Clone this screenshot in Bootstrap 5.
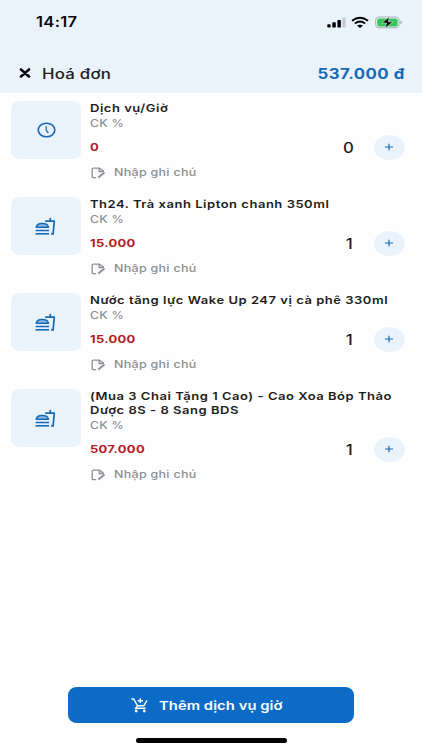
<!DOCTYPE html>
<html lang="vi">
<head>
<meta charset="utf-8">
<meta name="viewport" content="width=device-width, initial-scale=1">
<title>Hoá đơn</title>
<link href="https://cdn.jsdelivr.net/npm/bootstrap@5.3.0/dist/css/bootstrap.min.css" rel="stylesheet">
<style>
body{font-family:Inter,"Liberation Sans",sans-serif;color:#1c1d21;background:#fefefe;height:750px;overflow:hidden}
.top-area{background:#eaf2fb;height:93px}
.status-row{height:44px;padding:0 19px 0 36px}
.title-row{height:34px;margin-top:12px;padding:0 17px 0 19px}
.wide{display:inline-block;white-space:nowrap;transform:scaleX(1.2);transform-origin:0 50%}
.wide-end{transform-origin:100% 50%}
.clock-text{font-size:13.8px;font-weight:600;color:#08090b;letter-spacing:.25px;padding-top:1px}
.page-name{font-size:14px;font-weight:500;letter-spacing:.2px;margin-left:11px}
.total{font-size:14px;font-weight:700;color:#1769b7;letter-spacing:.4px}
.item-list{padding:8px 17px 0 11px}
.item{min-height:96px;gap:9px}
.thumb{width:70px;height:58px;border-radius:9px/7px;background:#eaf2fb;color:#1769b7}
.thumb .meal-icon{margin-top:1px}
.item-title{font-size:10.8px;line-height:14px;font-weight:600;letter-spacing:.45px;padding-top:1px}
.discount{font-size:10.2px;line-height:15px;font-weight:500;color:#8c8e94;letter-spacing:.25px}
.price-row{height:26px;margin-top:3px}
.price{font-size:10.8px;font-weight:700;color:#b52025;letter-spacing:.25px;padding-top:2px}
.qty{font-size:14px;font-weight:500;width:9px;margin-right:22px}
.qty-one{width:8px;margin-right:23px}
.plus{width:31px;height:25px;border-radius:50%;background:#eaf2fb;color:#1769b7}
.plus svg{margin-right:1px}
.note-row{height:15px;margin-top:5px;color:#8c8e94;gap:8px;padding-left:1px}
.note{font-size:10.4px;line-height:15px;font-weight:500;letter-spacing:.25px}
.add-btn,.add-btn:hover{width:286px;height:36px;border-radius:9px/8px;background:#0d6bc8;color:#fff;gap:11px}
.cart-icon{margin-left:63px}
.add-label{font-size:12.3px;font-weight:600;letter-spacing:.06px;width:103px;padding-top:2px}
.home-bar{width:151px;height:5px;background:#000;margin-top:15px;margin-bottom:7px}
</style>
<script src="https://cdn.jsdelivr.net/npm/bootstrap@5.3.0/dist/js/bootstrap.bundle.min.js"></script>
</head>
<body class="d-flex flex-column">
<svg width="0" height="0" class="position-absolute" aria-hidden="true">
  <symbol id="meal" viewBox="0 0 22 18">
    <path d="M1.2 9.3C1.5 6.8 4 5.5 7.3 5.5s5.8 1.3 6.2 3.8z" fill="#8ebbe6" stroke="currentColor" stroke-width="1.4" stroke-linejoin="round"/>
    <path d="M.6 12.5h13.5" stroke="currentColor" stroke-width="1.5"/><path d="M.6 15.8h13.5" stroke="currentColor" stroke-width="1.6"/>
    <path d="M10.2 3.2h9.7M15.3 0v3.2M19.3 3.2l-1.2 12.6h-2" fill="none" stroke="currentColor" stroke-width="1.7"/>
  </symbol>
  <symbol id="memo" viewBox="0 0 15 12">
    <path d="M5.2 10.6H2.2Q1.2 10.6 1.2 9.7V2Q1.2 1.1 2.2 1.1H8.7L12.3 4.1V5M8.2 1.4V4.5H12" fill="none" stroke="currentColor" stroke-width="1.3"/>
    <path d="M7.3 10.6L13.5 5.6" stroke="currentColor" stroke-width="1.9"/>
  </symbol>
  <symbol id="add" viewBox="0 0 10 8"><path d="M1 4h8M5 .7v6.6" stroke="currentColor" stroke-width="1.2"/></symbol>
</svg>
<header class="top-area flex-shrink-0">
  <div class="status-row d-flex align-items-center justify-content-between">
    <span class="wide clock-text">14:17</span>
    <div class="d-flex align-items-center">
      <svg width="19" height="11" viewBox="0 0 19 11"><rect x=".3" y="7.2" width="3.3" height="3.4" rx=".8"/><rect x="5.3" y="5.3" width="3.5" height="5.3" rx=".8"/><rect x="10.4" y="3" width="3.5" height="7.6" rx=".8"/><rect x="15.4" y=".6" width="3.2" height="10" rx=".8" fill="#c3c9d0"/></svg>
      <svg class="ms-1" width="20" height="13" viewBox="0 0 20 13"><path d="M2 4.7Q10-1.4 18 4.7M4.9 7.4Q10 3.6 15.1 7.4" fill="none" stroke="#000" stroke-width="1.9"/><path d="M7 9.6Q10 7.7 13 9.6L10 12z"/></svg>
      <svg class="ms-1" width="29" height="13" viewBox="0 0 29 13"><rect x="1.6" y="1" width="23.5" height="10.8" rx="3.3" fill="none" stroke="#9da9ac" stroke-width=".9"/><rect x="3.2" y="2.4" width="20.4" height="8" rx="2" fill="#35c759"/><path d="M26.5 4.8q1.5.3 1.5 1.7t-1.5 1.7z" fill="#9da9ac"/><path d="M15.5.8L7.9 7h4.6l-1.4 5.2L19 5.8h-4.8z" stroke="#eaf2fb" stroke-width=".6"/></svg>
    </div>
  </div>
  <div class="title-row d-flex align-items-center">
    <svg width="12" height="10" viewBox="0 0 12 10"><path d="M2 1.5l8 7M10 1.5l-8 7" stroke="#08090b" stroke-width="2.6" stroke-linecap="round"/></svg>
    <span class="wide page-name">Hoá đơn</span>
    <span class="wide wide-end total ms-auto">537.000 đ</span>
  </div>
</header>
<main class="item-list flex-grow-1">
  <section class="item d-flex">
    <div class="thumb d-flex flex-shrink-0 align-items-center justify-content-center"><svg width="19" height="16" viewBox="0 0 19 16"><ellipse cx="9.5" cy="8" rx="8.3" ry="6.8" fill="none" stroke="currentColor" stroke-width="1.6"/><path d="M9.2 4v4.2l2.2 3" fill="none" stroke="currentColor" stroke-width="1.2"/></svg></div>
    <div class="flex-grow-1">
      <div class="item-title"><span class="wide">Dịch vụ/Giờ</span></div>
      <div class="discount"><span class="wide">CK %</span></div>
      <div class="price-row d-flex align-items-center"><span class="wide price me-auto">0</span><span class="wide qty d-flex justify-content-end">0</span><span class="plus d-flex align-items-center justify-content-center"><svg width="10" height="8"><use href="#add"/></svg></span></div>
      <div class="note-row d-flex align-items-center"><svg width="15" height="12"><use href="#memo"/></svg><span class="wide note">Nhập ghi chú</span></div>
    </div>
  </section>
  <section class="item d-flex">
    <div class="thumb d-flex flex-shrink-0 align-items-center justify-content-center"><svg class="meal-icon" width="22" height="18"><use href="#meal"/></svg></div>
    <div class="flex-grow-1">
      <div class="item-title"><span class="wide">Th24. Trà xanh Lipton chanh 350ml</span></div>
      <div class="discount"><span class="wide">CK %</span></div>
      <div class="price-row d-flex align-items-center"><span class="wide price me-auto">15.000</span><span class="wide qty qty-one d-flex justify-content-end">1</span><span class="plus d-flex align-items-center justify-content-center"><svg width="10" height="8"><use href="#add"/></svg></span></div>
      <div class="note-row d-flex align-items-center"><svg width="15" height="12"><use href="#memo"/></svg><span class="wide note">Nhập ghi chú</span></div>
    </div>
  </section>
  <section class="item d-flex">
    <div class="thumb d-flex flex-shrink-0 align-items-center justify-content-center"><svg class="meal-icon" width="22" height="18"><use href="#meal"/></svg></div>
    <div class="flex-grow-1">
      <div class="item-title"><span class="wide">Nước tăng lực Wake Up 247 vị cà phê 330ml</span></div>
      <div class="discount"><span class="wide">CK %</span></div>
      <div class="price-row d-flex align-items-center"><span class="wide price me-auto">15.000</span><span class="wide qty qty-one d-flex justify-content-end">1</span><span class="plus d-flex align-items-center justify-content-center"><svg width="10" height="8"><use href="#add"/></svg></span></div>
      <div class="note-row d-flex align-items-center"><svg width="15" height="12"><use href="#memo"/></svg><span class="wide note">Nhập ghi chú</span></div>
    </div>
  </section>
  <section class="item d-flex">
    <div class="thumb d-flex flex-shrink-0 align-items-center justify-content-center"><svg class="meal-icon" width="22" height="18"><use href="#meal"/></svg></div>
    <div class="flex-grow-1">
      <div class="item-title"><span class="wide">(Mua 3 Chai Tặng 1 Cao) - Cao Xoa Bóp Thảo<br>Dược 8S - 8 Sang BDS</span></div>
      <div class="discount"><span class="wide">CK %</span></div>
      <div class="price-row d-flex align-items-center"><span class="wide price me-auto">507.000</span><span class="wide qty qty-one d-flex justify-content-end">1</span><span class="plus d-flex align-items-center justify-content-center"><svg width="10" height="8"><use href="#add"/></svg></span></div>
      <div class="note-row d-flex align-items-center"><svg width="15" height="12"><use href="#memo"/></svg><span class="wide note">Nhập ghi chú</span></div>
    </div>
  </section>
</main>
<footer class="d-flex flex-column align-items-center">
  <button type="button" class="btn add-btn border-0 p-0 d-flex align-items-center">
    <svg class="cart-icon" width="17" height="15" viewBox="0 0 17 15" fill="none" stroke="currentColor" stroke-width="1.4"><path d="M.3 1h2.4l3.8 6.8h6.3L16 2.3M6.3 7.8l-1.6 2.4h9.8M9.3.3v4.8M6.6 2.7H12"/><circle cx="5.2" cy="13" r="1.4" fill="currentColor" stroke="none"/><circle cx="13.3" cy="13" r="1.4" fill="currentColor" stroke="none"/></svg>
    <span class="wide add-label text-start">Thêm dịch vụ giờ</span>
  </button>
  <div class="home-bar rounded-pill"></div>
</footer>
</body>
</html>
